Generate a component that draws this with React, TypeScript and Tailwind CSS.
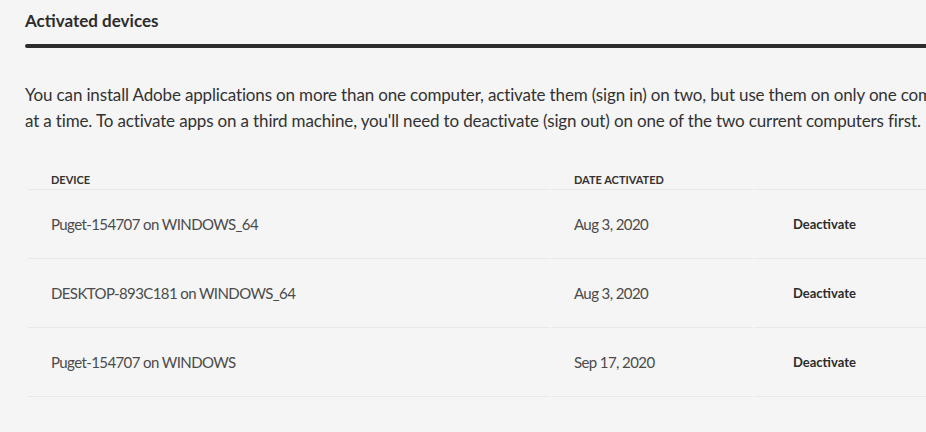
import React from 'react';

interface Device {
  name: string;
  date: string;
}

const DEVICES: Device[] = [
  { name: 'Puget-154707 on WINDOWS_64', date: 'Aug 3, 2020' },
  { name: 'DESKTOP-893C181 on WINDOWS_64', date: 'Aug 3, 2020' },
  { name: 'Puget-154707 on WINDOWS', date: 'Sep 17, 2020' },
];

export default function App() {
  return (
    <div className="w-[926px] h-[432px] overflow-hidden bg-[#f5f5f5] text-[#2c2c2c] font-['Lato',sans-serif]">
      <div className="w-[1100px] pl-[25px]">
        <h2 className="pt-[9px] h-[44px] text-[17px] font-bold leading-[24px]">Activated devices</h2>
        <div className="h-[4px] bg-[#2c2c2c] rounded-l-full" />

        <p className="mt-[34px] text-[17px] tracking-[-0.15px] leading-[26px] text-[#323232] whitespace-nowrap">
          You can install Adobe applications on more than one computer, activate them (sign in) on two, but use them on only one computer
          <br />
          at a time. To activate apps on a third machine, you'll need to deactivate (sign out) on one of the two current computers first.
        </p>

        <div className="mt-[25px] ml-[3px]">
          <div className="flex gap-[2px] h-[31px] items-end text-[11px] font-bold uppercase text-[#323232]">
            <div className="w-[521px] pl-[23px] pb-[1px] border-b border-[#e8e8e8]">Device</div>
            <div className="w-[202px] pl-[23px] pb-[1px] border-b border-[#e8e8e8]">Date activated</div>
            <div className="flex-1 pb-[1px] border-b border-[#e8e8e8]">&nbsp;</div>
          </div>
          {DEVICES.map(d => (
            <div key={d.name} className="flex gap-[2px] h-[69px] text-[15px] tracking-[-0.6px] text-[#4b4b4b]">
              <div className="w-[521px] pl-[23px] pt-[1px] flex items-center border-b border-[#e8e8e8]">{d.name}</div>
              <div className="w-[202px] pl-[23px] pt-[1px] flex items-center border-b border-[#e8e8e8]">{d.date}</div>
              <div className="flex-1 pl-[38px] pt-[1px] flex items-center border-b border-[#e8e8e8]">
                <button className="text-[13px] font-bold tracking-normal text-[#2c2c2c]">Deactivate</button>
              </div>
            </div>
          ))}
        </div>
      </div>
    </div>
  );
}
